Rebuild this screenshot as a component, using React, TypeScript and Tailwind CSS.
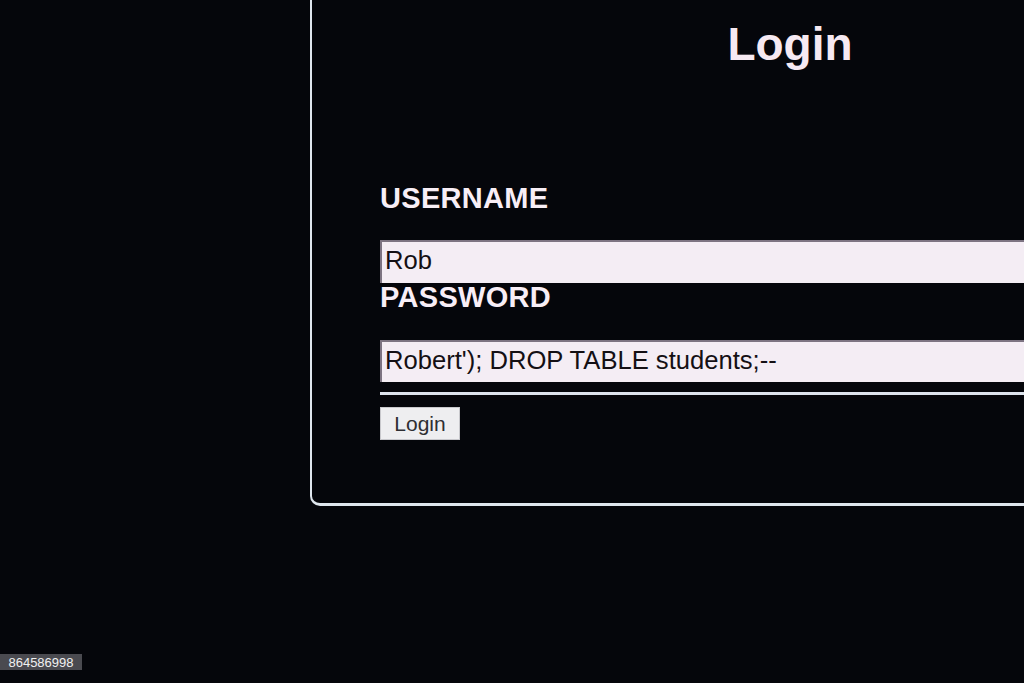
export default function App() {
  return (
    <div className="relative h-[683px] w-[1024px] overflow-hidden bg-[#05060b] font-['Liberation_Sans',Arial,sans-serif]">
      {/* Login panel, runs off the top and right edge of the screen */}
      <div className="ml-[310px] h-[506px] w-[958px] rounded-bl-[10px] border-b-[3px] border-l-[2px] border-[#dfe6ee] pt-[21px]">
        <h1 className="text-center text-[46px] leading-none font-bold text-[#f6e9f2]">Login</h1>

        <div className="mt-[117px] pl-[68px]">
          <div className="text-[29px] leading-none font-bold tracking-[0.3px] text-[#f8eef6]">USERNAME</div>
          <div className="mt-[27px] flex h-[43px] items-center border-t-2 border-l-2 border-[#7d7482] bg-[#f4edf4] px-[3px] pb-[4px] text-[25.6px] leading-none text-[#141014]">
            Rob
          </div>

          <div className="text-[29px] leading-none font-bold tracking-[0.3px] text-[#f8eef6]">PASSWORD</div>
          <div className="mt-[28px] flex h-[42px] items-center border-t-2 border-l-2 border-[#7d7482] bg-[#f4edf4] px-[3px] pb-[3px] text-[25.6px] leading-none text-[#141014]">
            Robert'); DROP TABLE students;--
          </div>

          <div className="mt-[10px] h-[3px] bg-[#dde3ec]" />

          <button className="mt-[12px] flex h-[33px] w-[80px] items-center justify-center border border-[#c8c8cc] bg-[#eeeef0] text-[21px] leading-none text-[#2e2e32]">
            Login
          </button>
        </div>
      </div>

      {/* stock photo id tag */}
      <div className="absolute bottom-[13px] left-0 flex h-[16px] w-[82px] items-center justify-center bg-[#4a4a50] text-[13px] leading-none text-[#f0f0f0]">
        864586998
      </div>
    </div>
  );
}
